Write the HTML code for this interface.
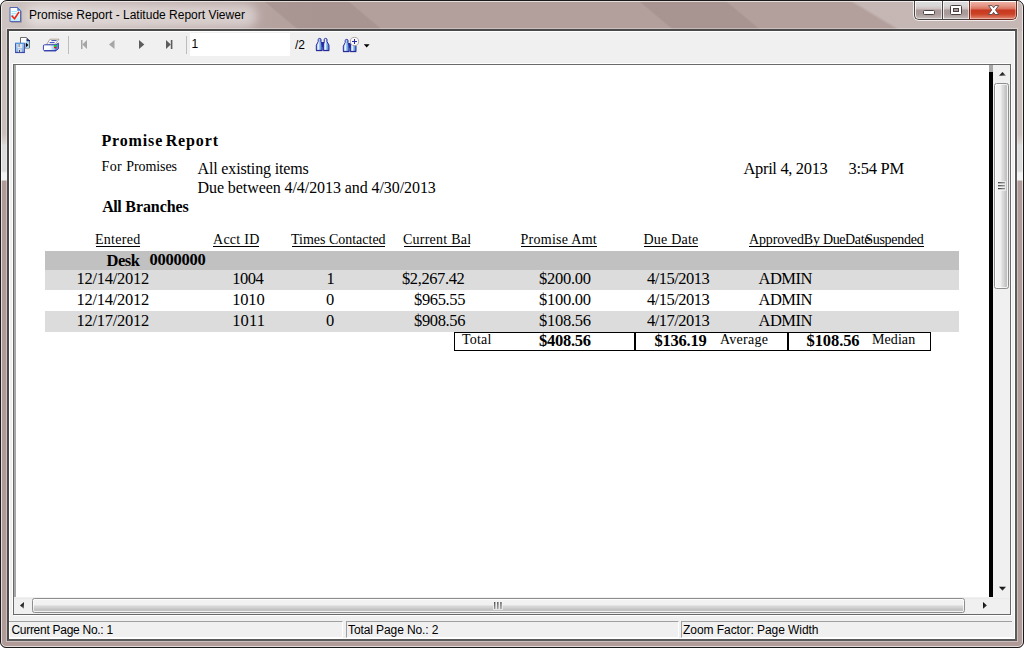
<!DOCTYPE html>
<html>
<head>
<meta charset="utf-8">
<title>Promise Report - Latitude Report Viewer</title>
<style>
html,body{margin:0;padding:0;}
body{width:1024px;height:648px;overflow:hidden;background:#fff;position:relative;font-family:"Liberation Sans",sans-serif;font-size:12px;color:#000;}
.abs{position:absolute;}
#win{position:absolute;left:0;top:0;width:1022px;height:646px;border:1px solid #1a1a1a;border-radius:7px 7px 6px 6px;overflow:hidden;
 background:
  linear-gradient(31deg, rgba(255,255,255,0) 0, rgba(255,255,255,0) 462px, rgba(255,255,255,0.24) 465px, rgba(255,255,255,0.24) 900px) 0 0/1024px 30px no-repeat,
  linear-gradient(40deg, rgba(0,0,0,0) 0, rgba(0,0,0,0) 191px, rgba(80,50,50,0.11) 193px, rgba(80,50,50,0.11) 245px, rgba(0,0,0,0) 247px, rgba(0,0,0,0) 432px, rgba(80,50,50,0.11) 434px, rgba(80,50,50,0.11) 488px, rgba(0,0,0,0) 490px) 0 0/1024px 30px no-repeat,
  linear-gradient(90deg,#cdc3c0 0,#c7bbb8 60px,#bdadaa 160px,#b6a4a1 250px,#b3a09d 320px,#b3a09d 1022px) 0 0/1024px 30px no-repeat,
  linear-gradient(180deg,#cbbfbc 0,#cbbfbc 103px,#d8d2cf 112px,#dcdcdc 114px,#dcdcdc 140px,#f2f2f2 142px,#f2f2f2 149px,#b09b98 150px,#b09b98 100%) 0 30px/1024px 620px no-repeat,
  #b09b98;}
#winhl{position:absolute;left:0;top:0;width:1020px;height:644px;border:1px solid rgba(255,255,255,0.65);border-radius:6px 6px 5px 5px;pointer-events:none;}
#client{position:absolute;left:6px;top:28px;width:1006px;height:608px;border:2px solid #555;border-color:#4a4a4a #5a5a5a #5a5a5a #4a4a4a;background:#f0f0f0;box-shadow:0 0 0 1px rgba(255,255,255,0.35);}
#clienthl{position:absolute;left:0;top:0;width:1004px;height:606px;border:1px solid #fff;}
.serif{font-family:"Liberation Serif",serif;}
.t{position:absolute;white-space:nowrap;line-height:1;}

#viewer{position:absolute;left:13px;top:64px;width:996px;height:549px;border:1px solid #696969;background:#fff;box-shadow:-1px -1px 0 #fff, 1px 1px 0 #fff;}
.sb{position:absolute;background:#f0f0f0;}
.thumbv{position:absolute;border:1px solid #8e8e8e;border-radius:2.5px;background:linear-gradient(90deg,#f3f3f3 0,#f0f0f0 6px,#dddddd 7px,#d6d6d6 9px,#c6c6c6 10px,#c2c2c2 12px,#e4e4e4 13px);box-shadow:inset 0 0 0 1px rgba(255,255,255,0.7);}
.thumbh{position:absolute;border:1px solid #8e8e8e;border-radius:2.5px;background:linear-gradient(180deg,#f3f3f3 0,#f0f0f0 6px,#d8d8d8 7px,#d0d0d0 9px,#c4c4c4 10px,#c2c2c2 12px,#e4e4e4 13px);box-shadow:inset 0 0 0 1px rgba(255,255,255,0.7);}
.stp{position:absolute;top:621px;height:17px;border-top:1px solid #a0a0a0;border-left:1px solid #a0a0a0;border-right:1px solid #fff;border-bottom:1px solid #fff;box-sizing:border-box;}
.stt{position:absolute;top:623px;font-size:12px;line-height:14px;white-space:nowrap;}

#wb{position:absolute;left:913px;top:1px;width:105px;height:20px;border-radius:0 0 6px 6px;background:rgba(255,255,255,0.75);}
.wbtn{position:absolute;top:1px;height:18px;border:1px solid #4a4444;border-top:none;box-sizing:content-box;}
.wg{background:linear-gradient(180deg,#ffffff 0,#ffffff 1px,#dcdcdc 1px,#d8d6d6 5px,#cdc0be 8px,#a89a98 9px,#a99b99 13px,#b9afad 16px,#c4bcba 18px);box-shadow:inset 1px 0 0 rgba(255,255,255,0.8), inset -1px 0 0 rgba(255,255,255,0.6), inset 0 -1px 0 rgba(255,255,255,0.5);}
.wr{background:linear-gradient(180deg,#ffffff 0,#ffffff 1px,#eeb0a2 1px,#e39483 5px,#d9705c 8px,#c8391f 9px,#cc4125 13px,#d96b52 16px,#e08e78 18px);box-shadow:inset 1px 0 0 rgba(255,255,255,0.45), inset -1px 0 0 rgba(255,255,255,0.35), inset 0 -1px 0 rgba(255,255,255,0.35);border-color:#6e2a1e;}
</style>
</head>
<body>
<div id="win">
 <div id="winhl"></div>
 <!-- title bar -->
 <div class="abs" style="left:24px;top:3px;width:232px;height:24px;border-radius:12px;background:rgba(255,255,255,0.45);filter:blur(5px);"></div>
 <div class="t" id="title" style="left:28px;top:8px;font-size:12px;">Promise Report - Latitude Report Viewer</div>
 <div id="client"><div id="clienthl"></div></div>
</div>

<div id="layer" class="abs" style="left:0;top:0;width:1024px;height:648px;">

 <!-- WINDOW BUTTONS -->
 <div id="wb"></div>
 <div class="wbtn wg" style="left:914px;width:27px;border-radius:0 0 0 5px;border-right:none;"></div>
 <div class="wbtn wg" style="left:942px;width:26px;border-right:none;"></div>
 <div class="wbtn wr" style="left:969px;width:46px;border-radius:0 0 5px 0;"></div>
 <svg class="abs" style="left:900px;top:0;" width="124" height="24" viewBox="900 0 124 24">
  <rect x="923.5" y="10.5" width="11" height="4" rx="1" fill="#fff" stroke="#4a4040" stroke-width="1"/>
  <rect x="950.5" y="5.5" width="11" height="9" rx="1" fill="#fff" stroke="#4a4040" stroke-width="1"/>
  <rect x="953.5" y="8.5" width="5" height="3" fill="#a89a98" stroke="#4a4040" stroke-width="1"/>
  <path d="M988.6 5.6 H992.2 L993.6 7.8 L995 5.6 H998.6 L995.5 10 L998.8 14.5 H995.1 L993.6 12.3 L992.1 14.5 H988.4 L991.7 10 Z" fill="#fff" stroke="#5a4a4a" stroke-width="0.9" stroke-linejoin="round"/>
 </svg>
 <!-- TOOLBAR -->
 <div class="abs" style="left:68px;top:36px;width:1px;height:18px;background:#bdbdbd;"></div>
 <div class="abs" style="left:186px;top:36px;width:1px;height:18px;background:#bdbdbd;"></div>
 <div class="abs" style="left:190px;top:33px;width:100px;height:23px;background:#fff;"></div>
 <div class="t" id="pgno" style="left:191.6px;top:38px;font-size:12px;">1</div>
 <div class="t" id="pgof" style="left:295px;top:39px;font-size:12px;">/2</div>
 <svg class="abs" style="left:0;top:30px;" width="400" height="34" viewBox="0 30 400 34">
  <!-- first -->
  <rect x="81" y="40" width="1.5" height="9" fill="#a6a6a6"/><path d="M87 40 L82.3 44.5 L87 49 Z" fill="#a6a6a6"/>
  <!-- prev -->
  <path d="M114.5 40 L109 44.5 L114.5 49 Z" fill="#a6a6a6"/>
  <!-- next -->
  <path d="M139 40 L144.3 44.5 L139 49 Z" fill="#5c5c5c"/>
  <!-- last -->
  <path d="M166 40 L170.8 44.5 L166 49 Z" fill="#5c5c5c"/><rect x="170.8" y="40" width="1.6" height="9" fill="#5c5c5c"/>
  <!-- dropdown -->
  <path d="M363.8 44.3 L369.6 44.3 L366.7 47.6 Z" fill="#000"/>
 </svg>

 <!-- ICONS -->
 <svg class="abs" style="left:0;top:0;" width="400" height="64" viewBox="0 0 400 64">
  <defs>
   <linearGradient id="gflop" x1="0" y1="0" x2="1" y2="1"><stop offset="0" stop-color="#a8d6f6"/><stop offset="1" stop-color="#7f9fe0"/></linearGradient>
   <linearGradient id="gprn" x1="0" y1="0" x2="1" y2="0"><stop offset="0" stop-color="#ffffff"/><stop offset="0.45" stop-color="#f4f8ff"/><stop offset="0.7" stop-color="#9fd0f4"/><stop offset="1" stop-color="#5f86d8"/></linearGradient>
   <linearGradient id="gbin" x1="0" y1="0" x2="1" y2="0"><stop offset="0" stop-color="#5b8fd8"/><stop offset="0.32" stop-color="#ffffff"/><stop offset="0.58" stop-color="#8fbdee"/><stop offset="1" stop-color="#356ec0"/></linearGradient>
   <linearGradient id="gdoc" x1="0" y1="0" x2="0" y2="1"><stop offset="0" stop-color="#ffffff"/><stop offset="0.3" stop-color="#f2fbff"/><stop offset="1" stop-color="#b8ecfb"/></linearGradient>
  </defs>
  <!-- title icon: doc with red check -->
  <g>
   <path d="M10.5 8 H18 L21 11 V22 H10.5 Z" fill="#3a3a5a" opacity="0.55" transform="translate(0.6,0.6)"/>
   <path d="M10 7.5 H17.5 L20.5 10.5 V21.5 H10 Z" fill="url(#gdoc)" stroke="#5a66b4" stroke-width="1"/>
   <path d="M17.5 7.5 V10.5 H20.5 Z" fill="#3a86e4" stroke="#3a76d4" stroke-width="0.5"/>
   <path d="M11.5 11.5 H17 M11.5 13.5 H16.5 M11.5 15.5 H14" stroke="#a8e6fa" stroke-width="1"/>
   <path d="M12.2 16.2 L14.6 18.8 L18.6 12.6" fill="none" stroke="#f5200f" stroke-width="1.6" stroke-linecap="square"/>
  </g>
  <!-- export icon -->
  <g>
   <path d="M20.5 37.5 H26.5 L29.5 40.5 V48 H20.5 Z" fill="#ffffff" stroke="#6e6e6e" stroke-width="1"/>
   <rect x="26" y="41" width="3" height="7" fill="#a6dcf8"/>
   <path d="M26.5 38 L29.5 41 H26.5 Z" fill="#1c2a78"/>
   <rect x="27" y="40" width="3" height="1.2" fill="#1c2a78"/>
   <path d="M25.7 42.6 L28.4 45 L25.7 47.4 Z" fill="#000"/>
   <rect x="15.5" y="43.3" width="9" height="9" fill="url(#gflop)" stroke="#3f5cc0" stroke-width="1"/>
   <path d="M15.5 43.3 H24.5" stroke="#5aa0e4" stroke-width="1"/>
   <rect x="17.6" y="44" width="4.6" height="4.4" fill="#dfe6ee"/>
   <rect x="18.4" y="44" width="1.6" height="3" fill="#9aa2b0"/>
   <rect x="18" y="49.4" width="3.6" height="3" fill="#f4f4f4"/>
   <rect x="18.8" y="50" width="1.4" height="2.4" fill="#556"/>
   <path d="M15.2 52.6 H24.8" stroke="#2f3ea0" stroke-width="0.9"/>
  </g>
  <!-- printer icon -->
  <g>
   <path d="M46.6 44.4 L50 39.2 H59 L55.2 44.4 Z" fill="#fdfdfd" stroke="#a89a8c" stroke-width="0.9"/>
   <path d="M51.4 40.6 H56.6 M49.6 42.6 H54.6" stroke="#3b4fc0" stroke-width="1"/>
   <path d="M44.6 44.8 H56 L58.4 43.2 V48.8 L56 50.6 H44.6 Q43.4 50.6 43.4 49.4 V46 Q43.4 44.8 44.6 44.8 Z" fill="url(#gprn)" stroke="#3344b4" stroke-width="1"/>
   <path d="M56 44.8 V50.6" stroke="#3344b4" stroke-width="0.8"/>
   <path d="M44 50.9 H56" stroke="#2a34a0" stroke-width="0.9"/>
   <rect x="54" y="45" width="2.4" height="1.8" fill="#06e010"/>
   <rect x="54" y="46.9" width="2.4" height="1.3" fill="#f41010"/>
   <rect x="45" y="46" width="5" height="2" fill="#ffffff" opacity="0.8"/>
  </g>
  <!-- binoculars (find) -->
  <g id="bino">
   <path d="M316.3 50.4 V45.2 L318.2 41.6 V39.6 Q318.2 38.4 319.6 38.4 Q321 38.4 321 39.6 V41.6 L322.2 44 V50.4 Z" fill="url(#gbin)" stroke="#2a2aa0" stroke-width="1" stroke-linejoin="round"/>
   <path d="M323.4 50.4 V44 L324.2 41.6 V39.6 Q324.2 38.4 325.6 38.4 Q327 38.4 327 39.6 V41.6 L329 45.2 V50.4 Z" fill="url(#gbin)" stroke="#2a2aa0" stroke-width="1" stroke-linejoin="round"/>
   <path d="M321 42 H324.4 L323.4 47.2 H322.2 Z" fill="#2a2aa0"/>
   <path d="M316 50.7 H322.4 M323.2 50.7 H329.3" stroke="#22228c" stroke-width="0.8"/>
  </g>
  <!-- binoculars + zoom -->
  <g transform="translate(27,1)">
   <path d="M316.3 50.4 V45.2 L318.2 41.6 V39.6 Q318.2 38.4 319.6 38.4 Q321 38.4 321 39.6 V41.6 L322.2 44 V50.4 Z" fill="url(#gbin)" stroke="#2a2aa0" stroke-width="1" stroke-linejoin="round"/>
   <path d="M323.4 50.4 V44 L324.2 41.6 V39.6 Q324.2 38.4 325.6 38.4 Q327 38.4 327 39.6 V41.6 L329 45.2 V50.4 Z" fill="url(#gbin)" stroke="#2a2aa0" stroke-width="1" stroke-linejoin="round"/>
   <path d="M321 42 H324.4 L323.4 47.2 H322.2 Z" fill="#2a2aa0"/>
   <path d="M316 50.7 H322.4 M323.2 50.7 H329.3" stroke="#22228c" stroke-width="0.8"/>
  </g>
  <circle cx="354.5" cy="41.5" r="4.1" fill="#fdfdfd" stroke="#a89a9a" stroke-width="0.9"/>
  <path d="M352 41.5 H357 M354.5 39 V44" stroke="#2a2aa0" stroke-width="1.1"/>
 </svg>
 <!-- VIEWER -->
 <div id="viewer"></div>
 <div class="abs" style="left:14px;top:65px;width:2px;height:533px;background:#a8a8a8;"></div>
 <div class="abs" style="left:989px;top:65px;width:4px;height:7px;background:#a8a8a8;"></div>
 <div class="abs" style="left:989px;top:72px;width:4px;height:525px;background:#000;"></div>

 <!-- REPORT -->
 <div class="serif" id="rep">
  <div class="abs" style="left:45px;top:251px;width:914px;height:19px;background:#c0c1c0;"></div>
  <div class="abs" style="left:45px;top:270px;width:914px;height:20px;background:#dcdcdc;"></div>
  <div class="abs" style="left:45px;top:311px;width:914px;height:21px;background:#dcdcdc;"></div>
  <div class="abs" style="left:454px;top:332px;width:477px;height:19px;border:1px solid #000;box-sizing:border-box;background:#fff;"></div>
  <div class="abs" style="left:634px;top:332px;width:2px;height:19px;background:#000;"></div>
  <div class="abs" style="left:787px;top:332px;width:2px;height:19px;background:#000;"></div>
  <div class="abs" style="left:96px;top:246px;width:44px;height:1px;background:#000;"></div>
  <div class="abs" style="left:213px;top:246px;width:46px;height:1px;background:#000;"></div>
  <div class="abs" style="left:292px;top:246px;width:93px;height:1px;background:#000;"></div>
  <div class="abs" style="left:404px;top:246px;width:66px;height:1px;background:#000;"></div>
  <div class="abs" style="left:521px;top:246px;width:76px;height:1px;background:#000;"></div>
  <div class="abs" style="left:644px;top:246px;width:54px;height:1px;background:#000;"></div>
  <div class="abs" style="left:749px;top:246px;width:175px;height:1px;background:#000;"></div>
  <div class="t" id="r1" style="left:101.40px;top:132.60px;font-size:16px;font-weight:bold;letter-spacing:0.870px;">Promise</div>
  <div class="t" id="r1b" style="left:165.70px;top:132.60px;font-size:16px;font-weight:bold;letter-spacing:0.864px;">Report</div>
  <div class="t" id="r2" style="left:101.40px;top:159.88px;font-size:14px;letter-spacing:0.450px;">For</div>
  <div class="t" id="r2b" style="left:126.20px;top:159.88px;font-size:14px;letter-spacing:-0.077px;">Promises</div>
  <div class="t" id="r3" style="left:197.50px;top:161.40px;font-size:16px;letter-spacing:-0.148px;">All existing items</div>
  <div class="t" id="r4" style="left:197.50px;top:180.10px;font-size:16px;letter-spacing:-0.076px;">Due between 4/4/2013 and 4/30/2013</div>
  <div class="t" id="r5" style="left:102.30px;top:199.30px;font-size:16px;font-weight:bold;letter-spacing:-0.540px;">All</div>
  <div class="t" id="r5b" style="left:125.30px;top:199.30px;font-size:16px;font-weight:bold;letter-spacing:-0.077px;">Branches</div>
  <div class="t" id="r6" style="left:743.50px;top:160.98px;font-size:16.5px;letter-spacing:-0.345px;">April 4, 2013</div>
  <div class="t" id="r7" style="left:848.50px;top:160.98px;font-size:16.5px;letter-spacing:-0.270px;">3:54 PM</div>
  <div class="t" id="h1" style="left:95.00px;top:232.97px;font-size:14px;letter-spacing:0.270px;">Entered</div>
  <div class="t" id="h2" style="left:213.00px;top:232.97px;font-size:14px;letter-spacing:0.270px;">Acct ID</div>
  <div class="t" id="h3" style="left:291.00px;top:232.97px;font-size:14px;letter-spacing:-0.013px;">Times Contacted</div>
  <div class="t" id="h4" style="left:403.00px;top:232.97px;font-size:14px;letter-spacing:0.234px;">Current Bal</div>
  <div class="t" id="h5" style="left:520.50px;top:232.97px;font-size:14px;letter-spacing:0.270px;">Promise Amt</div>
  <div class="t" id="h6" style="left:643.50px;top:232.97px;font-size:14px;letter-spacing:0.206px;">Due Date</div>
  <div class="t" id="h7" style="left:749.00px;top:232.97px;font-size:14px;letter-spacing:-0.150px;">ApprovedBy</div>
  <div class="t" id="h8" style="left:823.00px;top:232.97px;font-size:14px;letter-spacing:-0.400px;">DueDate</div>
  <div class="t" id="h9" style="left:865.20px;top:232.97px;font-size:14px;letter-spacing:-0.270px;">Suspended</div>
  <div class="t" id="g1" style="left:106.50px;top:253.18px;font-size:16.5px;font-weight:bold;letter-spacing:-0.480px;">Desk</div>
  <div class="t" id="g2" style="left:149.50px;top:251.88px;font-size:16.5px;font-weight:bold;letter-spacing:-0.240px;">0000000</div>
  <div class="t" id="t1" style="left:462.00px;top:332.67px;font-size:14px;letter-spacing:0.180px;">Total</div>
  <div class="t" id="t2" style="left:539.00px;top:333.18px;font-size:16.5px;font-weight:bold;letter-spacing:-0.270px;">$408.56</div>
  <div class="t" id="t3" style="left:654.50px;top:333.18px;font-size:16.5px;font-weight:bold;letter-spacing:-0.240px;">$136.19</div>
  <div class="t" id="t4" style="left:720.00px;top:332.67px;font-size:14px;letter-spacing:0.270px;">Average</div>
  <div class="t" id="t5" style="left:806.50px;top:333.18px;font-size:16.5px;font-weight:bold;letter-spacing:-0.090px;">$108.56</div>
  <div class="t" id="t6" style="left:872.00px;top:332.67px;font-size:14px;letter-spacing:0.072px;">Median</div>
  <div class="t" id="a1" style="left:76.50px;top:270.78px;font-size:16.5px;letter-spacing:-0.280px;">12/14/2012</div>
  <div class="t" id="b1" style="left:232.20px;top:270.78px;font-size:16.5px;letter-spacing:-0.480px;">1004</div>
  <div class="t" id="c1" style="left:326.50px;top:270.78px;font-size:16.5px;">1</div>
  <div class="t" id="d1" style="left:402.00px;top:270.78px;font-size:16.5px;letter-spacing:-0.405px;">$2,267.42</div>
  <div class="t" id="e1" style="left:539.00px;top:270.78px;font-size:16.5px;letter-spacing:-0.270px;">$200.00</div>
  <div class="t" id="f1" style="left:647.00px;top:270.78px;font-size:16.5px;letter-spacing:-0.518px;">4/15/2013</div>
  <div class="t" id="k1" style="left:758.50px;top:270.78px;font-size:16.5px;letter-spacing:-0.495px;">ADMIN</div>
  <div class="t" id="a2" style="left:76.50px;top:291.88px;font-size:16.5px;letter-spacing:-0.280px;">12/14/2012</div>
  <div class="t" id="b2" style="left:232.20px;top:291.88px;font-size:16.5px;letter-spacing:-0.180px;">1010</div>
  <div class="t" id="c2" style="left:326.00px;top:291.88px;font-size:16.5px;">0</div>
  <div class="t" id="d2" style="left:414.00px;top:291.88px;font-size:16.5px;letter-spacing:-0.360px;">$965.55</div>
  <div class="t" id="e2" style="left:539.00px;top:291.88px;font-size:16.5px;letter-spacing:-0.270px;">$100.00</div>
  <div class="t" id="f2" style="left:647.00px;top:291.88px;font-size:16.5px;letter-spacing:-0.518px;">4/15/2013</div>
  <div class="t" id="k2" style="left:758.50px;top:291.88px;font-size:16.5px;letter-spacing:-0.495px;">ADMIN</div>
  <div class="t" id="a3" style="left:76.50px;top:313.48px;font-size:16.5px;letter-spacing:-0.280px;">12/17/2012</div>
  <div class="t" id="b3" style="left:232.20px;top:313.48px;font-size:16.5px;letter-spacing:0.120px;">1011</div>
  <div class="t" id="c3" style="left:326.00px;top:313.48px;font-size:16.5px;">0</div>
  <div class="t" id="d3" style="left:414.00px;top:313.48px;font-size:16.5px;letter-spacing:-0.360px;">$908.56</div>
  <div class="t" id="e3" style="left:539.00px;top:313.48px;font-size:16.5px;letter-spacing:-0.270px;">$108.56</div>
  <div class="t" id="f3" style="left:647.00px;top:313.48px;font-size:16.5px;letter-spacing:-0.518px;">4/17/2013</div>
  <div class="t" id="k3" style="left:758.50px;top:313.48px;font-size:16.5px;letter-spacing:-0.495px;">ADMIN</div>
 </div>
 <!-- v scrollbar -->
 <div class="sb" style="left:993px;top:65px;width:17px;height:533px;"></div>
 <div class="thumbv" style="left:994px;top:83px;width:13px;height:204px;"></div>
 <!-- h scrollbar -->
 <div class="sb" style="left:14px;top:597px;width:996px;height:17px;background:linear-gradient(180deg,#fafafa 0,#e6e6e6 1px,#ededed 2px,#f0f0f0 3px);"></div>
 <div class="thumbh" style="left:32px;top:598px;width:931px;height:13px;"></div>
 <svg class="abs" style="left:0;top:60px;" width="1024" height="560" viewBox="0 60 1024 560">
  <path d="M999 75.8 L1002.5 72 L1006 75.8 Z" fill="url(#ga)"/>
  <path d="M999 586.8 L1006 586.8 L1002.5 590.8 Z" fill="url(#ga)"/>
  <path d="M24 602 L20 605.4 L24 608.8 Z" fill="url(#ga)"/>
  <path d="M983 602 L987 605.4 L983 608.8 Z" fill="url(#ga)"/>
  <rect x="997" y="181" width="9" height="10" fill="#f4f4f4" opacity="0.7"/>
  <rect x="493" y="601" width="10" height="9" fill="#f4f4f4" opacity="0.7"/>
  <defs>
   <linearGradient id="ga" x1="0" y1="0" x2="1" y2="1"><stop offset="0" stop-color="#000"/><stop offset="0.55" stop-color="#2a2a2a"/><stop offset="1" stop-color="#909090"/></linearGradient>
   <linearGradient id="gv" x1="0" y1="0" x2="1" y2="0"><stop offset="0" stop-color="#222"/><stop offset="1" stop-color="#8a8a8a"/></linearGradient>
   <linearGradient id="gh" x1="0" y1="0" x2="0" y2="1"><stop offset="0" stop-color="#222"/><stop offset="1" stop-color="#8a8a8a"/></linearGradient>
  </defs>
  <rect x="998" y="182.2" width="7" height="1.1" fill="url(#gv)"/><rect x="998" y="185.2" width="7" height="1.1" fill="url(#gv)"/><rect x="998" y="188.1" width="7" height="1.1" fill="url(#gv)"/>
  <rect x="494.2" y="602" width="1.1" height="7" fill="url(#gh)"/><rect x="497.3" y="602" width="1.1" height="7" fill="url(#gh)"/><rect x="500.4" y="602" width="1.1" height="7" fill="url(#gh)"/>
 </svg>
 <!-- STATUS BAR -->
 <div class="stp" style="left:9px;width:334px;border-left:none;"></div>
 <div class="stp" style="left:346px;width:333px;"></div>
 <div class="stp" style="left:681px;width:331px;border-right:none;"></div>
 <div class="stt" id="st1" style="left:11.4px;letter-spacing:-0.275px;">Current Page No.: 1</div>
 <div class="stt" id="st2" style="left:348px;letter-spacing:-0.1px;">Total Page No.: 2</div>
 <div class="stt" id="st3" style="left:683px;letter-spacing:-0.055px;">Zoom Factor: Page Width</div>
</div>
</body>
</html>
